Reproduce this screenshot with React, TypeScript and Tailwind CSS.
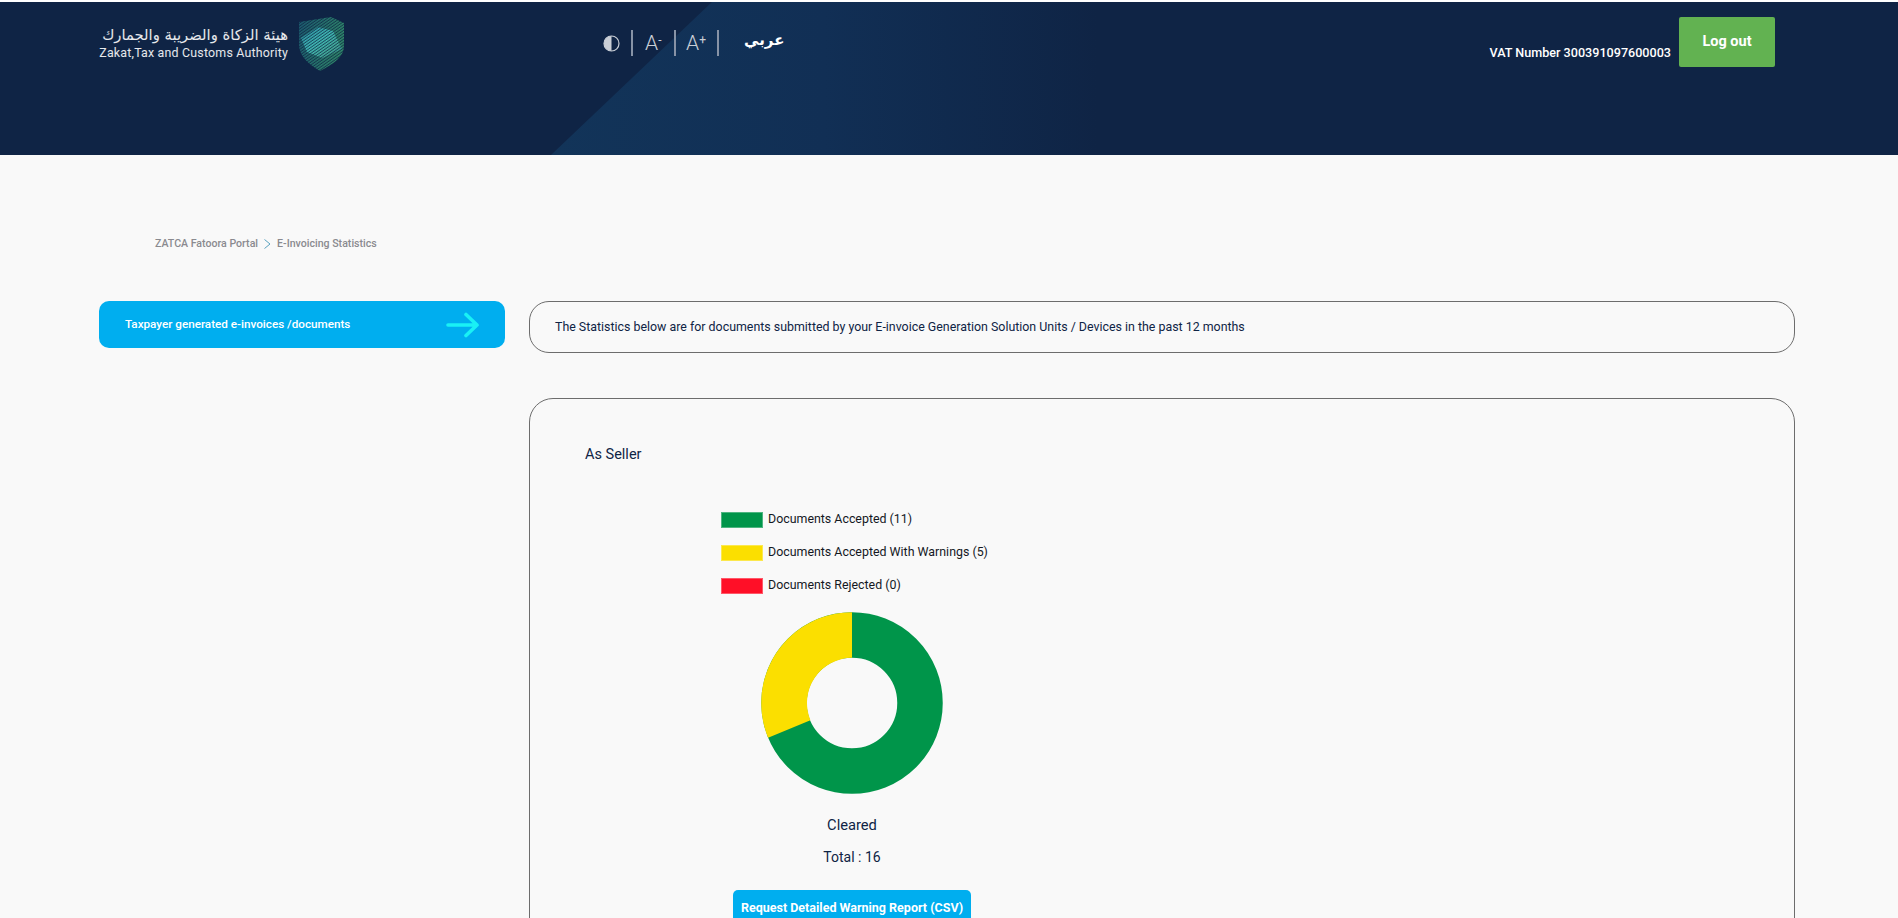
import React from "react";

function Shield() {
  return (
    <svg width="46" height="56" viewBox="0 0 46 56" className="block">
      <defs>
        <linearGradient id="shieldFill" x1="0" y1="0" x2="1" y2="1">
          <stop offset="0" stopColor="#2a8fa0" />
          <stop offset="0.45" stopColor="#42c0b8" />
          <stop offset="0.75" stopColor="#45b09a" />
          <stop offset="1" stopColor="#2a7f90" />
        </linearGradient>
        <linearGradient id="shieldBase" x1="0" y1="0" x2="1" y2="0.3">
          <stop offset="0" stopColor="#1b5a70" />
          <stop offset="1" stopColor="#2f8a6a" />
        </linearGradient>
        <pattern id="hatch" width="2.4" height="2.4" patternUnits="userSpaceOnUse" patternTransform="rotate(-35)">
          <rect width="2.4" height="2.4" fill="#3a3a3a" />
          <rect width="2.4" height="1.4" fill="#ffffff" />
        </pattern>
        <mask id="hatchMask">
          <rect width="46" height="56" fill="url(#hatch)" />
        </mask>
        <clipPath id="shieldClip">
          <path d="M1 6 L33 1 L46 7 L46 30 C46 40 36 48 22 55 C10 48 2 40 1 30 Z" />
        </clipPath>
      </defs>
      <g clipPath="url(#shieldClip)" mask="url(#hatchMask)">
        <rect width="46" height="56" fill="url(#shieldBase)" />
        <path d="M3 22 L20 11 L35 15 L44 33 L24 42 L9 36 Z" fill="url(#shieldFill)" />
      </g>
    </svg>
  );
}

function Legend({ color, label }: { color: string; label: string }) {
  return (
    <div className="flex h-[33px] items-center gap-[5px]">
      <div className={`h-[16px] w-[42px] border border-white/30 ${color}`} />
      <span className="text-[12.4px] leading-none text-[#14181f]">{label}</span>
    </div>
  );
}

export default function App() {
  return (
    <div
      className="h-[918px] overflow-hidden bg-[#f9f9f9] text-[#0f2445]"
      style={{ fontFamily: "Roboto, 'DejaVu Sans', sans-serif" }}
    >
      <div className="h-[2px] bg-white" />
      <header className="relative flex h-[153px] bg-[#0f2445]">
        <svg className="absolute inset-0 h-full w-full" viewBox="0 0 1898 153" preserveAspectRatio="none">
          <defs>
            <linearGradient id="sweep" x1="0" y1="0" x2="1" y2="0">
              <stop offset="0" stopColor="#123459" />
              <stop offset="0.5" stopColor="#112f55" />
              <stop offset="1" stopColor="#0f2445" />
            </linearGradient>
          </defs>
          <polygon points="551,153 712,0 1098,0 1098,153" fill="url(#sweep)" />
        </svg>
        <div className="relative flex w-full">
          <div className="flex w-[603px] items-start gap-[10px] pl-[100px] pt-[14px]">
            <div className="flex w-[188px] flex-col items-end whitespace-nowrap pt-[9px] text-white/90">
              <span className="text-[14.8px] leading-[20px]" style={{ fontFamily: "'DejaVu Sans', sans-serif" }} dir="rtl">
                هيئة الزكاة والضريبة والجمارك
              </span>
              <span className="text-[12.4px] leading-[16px] tracking-[0.2px]">Zakat,Tax and Customs Authority</span>
            </div>
            <Shield />
          </div>
          <div className="mt-[28px] flex h-[26px] items-center text-[#c9ced6]">
            <svg width="17" height="17" viewBox="0 0 17 17">
              <circle cx="8.5" cy="8.5" r="7.5" fill="none" stroke="#c9ced6" strokeWidth="1.2" />
              <path d="M8.5 1 A7.5 7.5 0 0 0 8.5 16 Z" fill="#c9ced6" />
            </svg>
            <div className="ml-[11px] h-[26px] w-[2px] bg-[#8793a6]" />
            <span className="ml-[12px] flex w-[19px] items-start whitespace-nowrap text-[21px] font-light leading-none">
              A<span className="mt-[1px] text-[12px] font-normal leading-none">-</span>
            </span>
            <div className="ml-[10px] h-[26px] w-[2px] bg-[#8793a6]" />
            <span className="ml-[10px] flex w-[22px] items-start whitespace-nowrap text-[21px] font-light leading-none">
              A<span className="mt-[1px] text-[12px] font-normal leading-none">+</span>
            </span>
            <div className="ml-[9px] h-[26px] w-[2px] bg-[#8793a6]" />
            <span className="mb-[6px] ml-[25px] text-[15px] font-bold leading-none text-white" style={{ fontFamily: "'DejaVu Sans', sans-serif" }}>
              عربي
            </span>
          </div>
          <div className="ml-auto flex items-start pr-[123px] pt-[15px]">
            <span className="mr-[8px] mt-[28px] whitespace-nowrap text-[12.6px] font-medium leading-[16px] text-white">
              VAT Number 300391097600003
            </span>
            <button className="h-[50px] w-[96px] rounded-[2px] bg-[#62b251] text-[14.5px] font-bold text-white">Log out</button>
          </div>
        </div>
      </header>

      <nav className="flex items-center pl-[155px] pt-[82px] text-[10.6px] font-medium leading-[14px] text-[#8a8a8f]">
        <span>ZATCA Fatoora Portal</span>
        <svg width="9" height="12" viewBox="0 0 9 12" className="mx-[5px]">
          <path d="M1.5 1.5 L7 6 L1.5 10.5" fill="none" stroke="#5ba3c0" strokeWidth="1" />
        </svg>
        <span>E-Invoicing Statistics</span>
      </nav>

      <div className="flex gap-[24px] pl-[99px] pt-[50px]">
        <aside className="w-[406px] shrink-0">
          <div className="flex h-[47px] items-center justify-between rounded-[10px] bg-[#00aeef] pl-[26px] pr-[25px] text-[11.7px] font-medium text-white">
            <span>Taxpayer generated e-invoices /documents</span>
            <svg width="34" height="26" viewBox="0 0 34 26">
              <path d="M2 13 H31 M20 2.5 L31 13 L20 23.5" fill="none" stroke="#19f1f5" strokeWidth="3.6" strokeLinecap="round" strokeLinejoin="round" />
            </svg>
          </div>
        </aside>
        <main className="w-[1266px] shrink-0">
          <div className="flex h-[52px] items-center rounded-[20px] border border-[#6d6d6d] pl-[25px] text-[12.4px] font-[450] text-[#0f2445]">
            The Statistics below are for documents submitted by your E-invoice Generation Solution Units / Devices in the past 12 months
          </div>
          <section className="mt-[45px] h-[700px] rounded-[24px] border border-[#6d6d6d] pl-[55px] pt-[46px]">
            <h2 className="text-[14.5px] font-[450] leading-[20px]">As Seller</h2>
            <div className="ml-[136px] mt-[38px] w-[300px]">
              <Legend color="bg-[#00954a]" label="Documents Accepted (11)" />
              <Legend color="bg-[#fbdf00]" label="Documents Accepted With Warnings (5)" />
              <Legend color="bg-[#ff0f27]" label="Documents Rejected (0)" />
            </div>
            <div className="ml-[95px] w-[344px]">
              <div className="flex flex-col items-center">
                <svg width="182" height="182" viewBox="0 0 182 182" className="mt-[10px]">
                  <circle cx="91" cy="91" r="68" fill="none" stroke="#00954a" strokeWidth="45.5" />
                  <path d="M91 0.2 A90.8 90.8 0 0 0 7.1 125.7 L49.4 108.2 A45.2 45.2 0 0 1 91 45.8 Z" fill="#fbdf00" />
                </svg>
                <p className="mt-[21px] text-[14.7px] font-[450] leading-[20px]">Cleared</p>
                <p className="mt-[12px] text-[14px] font-[450] leading-[20px]">Total : 16</p>
                <button className="mt-[23px] h-[36px] w-[238px] rounded-[5px] bg-[#00aeef] text-[12.5px] font-bold text-white">
                  Request Detailed Warning Report (CSV)
                </button>
              </div>
            </div>
          </section>
        </main>
      </div>
    </div>
  );
}
